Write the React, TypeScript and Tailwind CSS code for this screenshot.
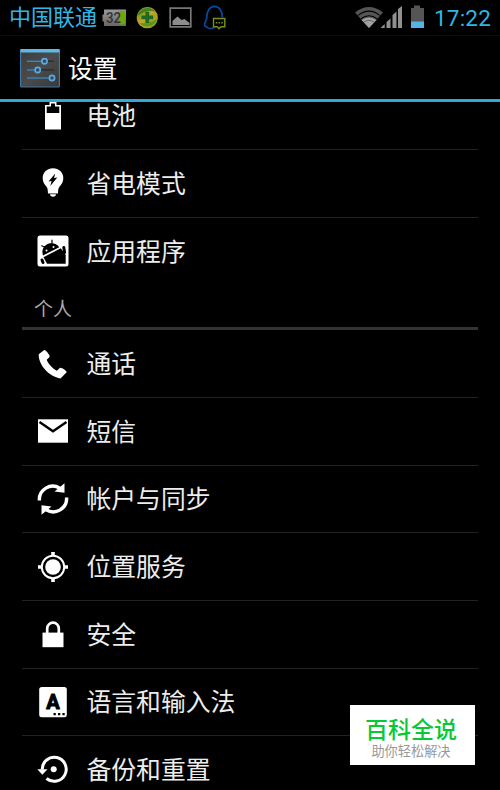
import type { ReactNode } from "react";

function Icon({ children }: { children: ReactNode }) {
  return (
    <svg viewBox="0 0 32 32" className="h-8 w-8 shrink-0" fill="#fff">
      {children}
    </svg>
  );
}

const icons = {
  battery: (
    <Icon>
      <path
        fillRule="evenodd"
        d="M12.5 2h7v3H24v24.500H8V5h4.500zM14 3.500v3H9.700V13h12.600V6.500H18v-3z"
      />
    </Icon>
  ),
  bulb: (
    <Icon>
      <path
        fillRule="evenodd"
        d="M16 1.300c-6 0-10.300 4.300-10.300 9.900 0 4.200 2 6.200 3.800 8.600 1 1.400 1.300 2.400 1.500 6.800h10c.2-4.400.5-5.400 1.500-6.800 1.800-2.400 3.800-4.400 3.800-8.600 0-5.600-4.300-9.900-10.300-9.900zM18.200 6.500l-1.200 4.500 3.300-.4-7 8.400 1.300-5-3.100.4z"
      />
      <path d="M13 27.300h6c0 1.600-1.200 2.400-3 2.400s-3-.8-3-2.400z" />
    </Icon>
  ),
  apps: (
    <Icon>
      <rect x="0.500" y="0.500" width="31" height="31" rx="2.500" />
      <g fill="#000" stroke="#000">
        <path stroke="none" d="M6 20.500c-2-5.700 1-10.200 5.300-11.700 4.500-1.300 8.800.2 10.900 3.400z" />
        <path strokeWidth="1.200" strokeLinecap="round" d="M7.500 12 4.700 10.800M15 8.500V5.200" />
        <path stroke="none" d="m6.500 22.200 17.300-9L28.700 20v8.700H10z" />
        <path strokeWidth="3" strokeLinecap="round" d="m26.800 12.500.8 5" />
        <path strokeWidth="3" strokeLinecap="round" d="m5 25 1 2.500" />
      </g>
      <circle cx="9.500" cy="15.500" r="1" />
      <circle cx="16.500" cy="12" r="1" />
    </Icon>
  ),
  phone: (
    <Icon>
      <path d="M7.200 2 1.700 6.300C1.200 17 12.500 29 23.500 30.400l6.200-6.100c.2-1.300-5.300-5-6.900-4.400l-3 2.900C15.500 20.700 11 15.500 9.700 11.800l2.900-2.900C13.300 7 8.600 1.800 7.200 2z" />
    </Icon>
  ),
  mail: (
    <Icon>
      <path d="M1 4.300h30v23.400H1z" />
      <path d="M2.500 7 16 16.200 29.500 7" fill="none" stroke="#000" strokeWidth="2.400" />
    </Icon>
  ),
  sync: (
    <Icon>
      <g fill="none" stroke="#fff" strokeWidth="3.400">
        <path d="M2.400 17.500A13.400 13.400 0 0 1 22.800 5.200" />
        <path d="M29.600 14.500A13.400 13.400 0 0 1 9.200 26.800" />
      </g>
      <path d="M27.500.3v9.500l-10-1.300z" />
      <path d="M4.500 31.700v-9.500l10 1.300z" />
    </Icon>
  ),
  location: (
    <Icon>
      <circle cx="16" cy="16" r="7.800" />
      <circle cx="16" cy="16" r="11.200" fill="none" stroke="#fff" strokeWidth="2" />
      <path d="M14.200 1h3.600v4h-3.600zM14.200 27h3.600v4h-3.600zM1 14.200h4v3.600H1zM27 14.200h4v3.600h-4z" />
    </Icon>
  ),
  lock: (
    <Icon>
      <path d="M5.500 14.600h21v14.600h-21z" />
      <path d="M10.200 15V10.500a5.800 5.800 0 0 1 11.600 0V15" fill="none" stroke="#fff" strokeWidth="2.700" />
    </Icon>
  ),
  language: (
    <Icon>
      <rect x="2.200" y="1" width="27.600" height="30.300" rx="2.500" />
      <text
        x="16"
        y="22.600"
        textAnchor="middle"
        fill="#000"
        stroke="#000"
        strokeWidth="1"
        strokeLinejoin="round"
        className="font-[Roboto] text-[20px] font-bold"
      >
        A
      </text>
      <path d="M16.500 27h2.300v2.300h-2.300zM21 27h2.300v2.300H21zM25.400 27h2.300v2.300h-2.300z" fill="#000" />
    </Icon>
  ),
  backup: (
    <Icon>
      <path d="M5.200 16.500A12 12 0 1 1 9.500 25.500" fill="none" stroke="#fff" strokeWidth="3" />
      <path d="M.3 16.200h10.200l-5.100 5.600z" />
      <circle cx="16.700" cy="16.200" r="3" />
    </Icon>
  ),
};

type Item = { label: string; icon: ReactNode };

const device: Item[] = [
  { label: "电池", icon: icons.battery },
  { label: "省电模式", icon: icons.bulb },
  { label: "应用程序", icon: icons.apps },
];

const personal: Item[] = [
  { label: "通话", icon: icons.phone },
  { label: "短信", icon: icons.mail },
  { label: "帐户与同步", icon: icons.sync },
  { label: "位置服务", icon: icons.location },
  { label: "安全", icon: icons.lock },
  { label: "语言和输入法", icon: icons.language },
  { label: "备份和重置", icon: icons.backup },
];

function Rows({ items }: { items: Item[] }) {
  return (
    <ul>
      {items.map((item) => (
        <li
          key={item.label}
          className="flex h-[67.650px] items-center border-b border-[#222] pl-[15px] last:border-transparent"
        >
          {item.icon}
          <span className="ml-[17.500px] pb-[3px] text-[24.800px] leading-8 text-[#ededed]">{item.label}</span>
        </li>
      ))}
    </ul>
  );
}

function StatusBar() {
  return (
    <div className="flex h-9 shrink-0 items-center border-b border-[#0c0c0c] pl-[9px] pr-[9px]">
      <span className="w-[93px] whitespace-nowrap pb-[6px] text-[22px] leading-7 text-[#33b5e5]">中国联通</span>
      <svg viewBox="0 0 126 36" className="h-9 w-[126px]">
        <defs>
          <linearGradient id="shell" x1="0" y1="0" x2="0" y2="1">
            <stop offset="0" stopColor="#999" />
            <stop offset="1" stopColor="#666" />
          </linearGradient>
          <linearGradient id="ball" x1="0" y1="0" x2="1" y2="1">
            <stop offset="0" stopColor="#4c8c1c" />
            <stop offset="0.450" stopColor="#c4a32c" />
            <stop offset="1" stopColor="#8aa01e" />
          </linearGradient>
        </defs>
        <path d="M2 9.500h22v16.500H2v-4.500H.5v-7H2z" fill="url(#shell)" />
        <path d="M17.500 11H23v13.500h-5.500z" fill="#6ba80c" />
        <text
          x="4"
          y="23"
          textLength="15"
          lengthAdjust="spacingAndGlyphs"
          fill="#333"
          className="font-[Roboto] text-[14.500px] font-medium"
        >
          32
        </text>
        <circle cx="45.300" cy="17.700" r="10.600" fill="url(#ball)" />
        <path d="M35.500 16c2-8 13-11 18-4-6-3-12 0-18 4z" fill="#3f8420" />
        <path d="M55.500 19c-3 8-13 10-18 4 7 1 12-1 18-4z" fill="#5c961f" />
        <path d="M43.400 11.700h3.800v3.800h4v3.800h-4v3.800h-3.800v-3.800h-4v-3.800h4z" fill="#1d6a22" />
        <path d="M68.200 8.200h20.600v18.600H68.200z" fill="none" stroke="#777" strokeWidth="1.700" />
        <path d="M70.500 25v-4l5-4.500 4 3.500 3-1 5 4v2z" fill="#8c8c8c" />
        <path
          d="M112.500 27.500c-3 1.500-6.500 1-8-.8-1 0-2.400-.3-1.800-3 .5-2 2-4 2-5.700 0-7 3-11.700 7.800-11.700s7.800 5 8 11.200"
          fill="none"
          stroke="#07499b"
          strokeWidth="1.700"
        />
        <path d="M111.500 18.500h11.300v8.300h-4l-1.800 1.900-1.700-1.900h-3.800z" fill="#000" stroke="#75931b" strokeWidth="1.400" />
        <path d="M113.800 22h1.600v1.600h-1.600zM116.500 22h1.600v1.600h-1.600zM119.200 22h1.600v1.600h-1.600z" fill="#75931b" />
      </svg>
      <svg viewBox="0 0 72 36" className="ml-auto h-9 w-[72px]">
        <path d="M0 12.500Q14 1.500 28 12.500L14 28z" fill="#555" />
        <path d="M6.500 20Q14 15 21.500 20L14 28z" fill="#a0a0a0" />
        <path d="M3.200 15.400q10.800-8.500 21.600 0M6 18.800q8-6 16 0" fill="none" stroke="#000" strokeWidth="1.100" />
        <path d="M9 22q5-3.500 10 0" fill="none" stroke="#555" strokeWidth=".8" />
        <path
          d="M25.500 28l4.200-4v4zM31.500 22l4-3.500V28h-4zM37.500 15l4-3.500V28h-4zM43 9l4-3V28h-4z"
          fill="#909090"
        />
        <path d="M59 5.500h6V8h4v20H56V8h3z" fill="#555" />
        <path d="M56 21.500h13V28H56z" fill="#57b3e4" />
      </svg>
      <span className="ml-[7px] w-[57px] whitespace-nowrap font-[Roboto] text-[22.500px] leading-8 tracking-[0.200px] text-[#33b5e5]">
        17:22
      </span>
    </div>
  );
}

function SettingsLogo() {
  return (
    <svg viewBox="0 0 40 40" className="h-10 w-10">
      <defs>
        <linearGradient id="panel" x1="0" y1="0" x2="1" y2="1">
          <stop offset="0" stopColor="#3c3c3c" />
          <stop offset="0.500" stopColor="#4b4b4b" />
          <stop offset="1" stopColor="#383838" />
        </linearGradient>
      </defs>
      <rect x=".6" y="1.600" width="38.800" height="37.400" rx="1" fill="url(#panel)" stroke="#3a78a8" strokeWidth="1.200" />
      <path d="M.5 1h39v3.500H.5z" fill="#5fb6e8" />
      <path d="M7 13.300h27M7 22h27M7 30h27" stroke="#292f34" strokeWidth="1.500" />
      <path d="M7 13.300h15M7 22h8.500M7 30h22" stroke="#3c87bb" strokeWidth="1.500" />
      <g fill="#384a58" stroke="#5aaae0" strokeWidth="1.700">
        <circle cx="24.500" cy="13.300" r="2.600" />
        <circle cx="17.700" cy="22" r="2.600" />
        <circle cx="32" cy="30" r="2.600" />
      </g>
    </svg>
  );
}

export default function App() {
  return (
    <div className="relative flex h-[790px] w-[500px] flex-col overflow-hidden bg-black font-['Noto_Sans_CJK_SC',sans-serif]">
      <StatusBar />
      <header className="flex h-[66px] shrink-0 items-center border-b-[3px] border-[#33a9da] pl-5">
        <SettingsLogo />
        <h1 className="ml-2 pb-px text-[24.800px] leading-8 text-white">设置</h1>
      </header>
      <main className="min-h-0 flex-1 overflow-hidden px-[22px]">
        {/* list is scrolled partway through the first row */}
        <div className="-mt-[19.600px]">
          <Rows items={device} />
          <h2 className="flex h-[45px] items-center border-b-[3px] border-[#333] pl-3 pt-[3px] text-[19px] leading-6 text-[#a8a8a8]">
            个人
          </h2>
          <Rows items={personal} />
        </div>
      </main>
      <div className="absolute left-[350px] top-[705px] flex h-[60px] w-[125px] flex-col items-center bg-white pr-[3px] pt-[9px]">
        <p className="text-[23px] font-medium leading-7 text-[#07c935]">百科全说</p>
        <p className="text-[13.200px] leading-[18px] text-[#999]">助你轻松解决</p>
      </div>
    </div>
  );
}
